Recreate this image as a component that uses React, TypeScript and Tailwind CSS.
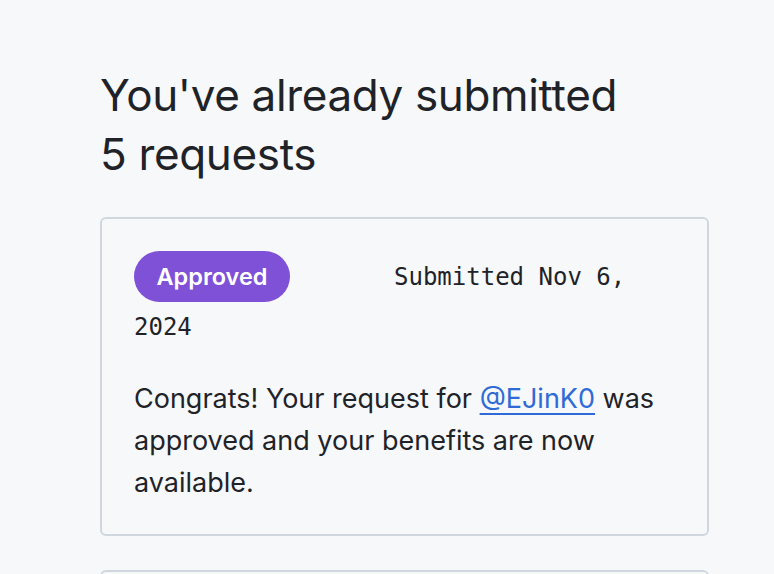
export default function App() {
  return (
    <div className="min-h-screen bg-[#f6f8fa] text-[#1f2328] font-['Inter',sans-serif] overflow-hidden">
      <div className="pl-[100px] pr-[65px] pt-[66px]">
        <h1 className="text-[44px] leading-[59px] font-normal tracking-[-0.35px]">
          You've already submitted
          <br />5 requests
        </h1>

        {/* request card */}
        <div className="mt-[33px] border-2 border-[#d0d7de] rounded-md px-[32px] pt-[31px] pb-[30px]">
          <div className="leading-[50px]">
            <span className="inline-flex items-center justify-center align-middle h-[51px] w-[156px] rounded-full bg-[#7f51d6] text-white text-[23.5px] font-semibold">
              Approved
            </span>
            <span className="ml-[104px] font-['DejaVu_Sans_Mono',monospace] text-[24px] align-middle">
              Submitted Nov 6,
            </span>
            <br />
            <span className="font-['DejaVu_Sans_Mono',monospace] text-[24px]">2024</span>
          </div>
          <p className="mt-[24px] text-[27px] leading-[42px]">
            Congrats! Your request for{' '}
            <a href="#" className="text-[#2f6bd6] underline underline-offset-[5px]">
              @EJinK0
            </a>{' '}
            was approved and your benefits are now available.
          </p>
        </div>

        <div className="mt-[34px] border-2 border-[#d0d7de] rounded-md h-[120px]" />
      </div>
    </div>
  )
}
